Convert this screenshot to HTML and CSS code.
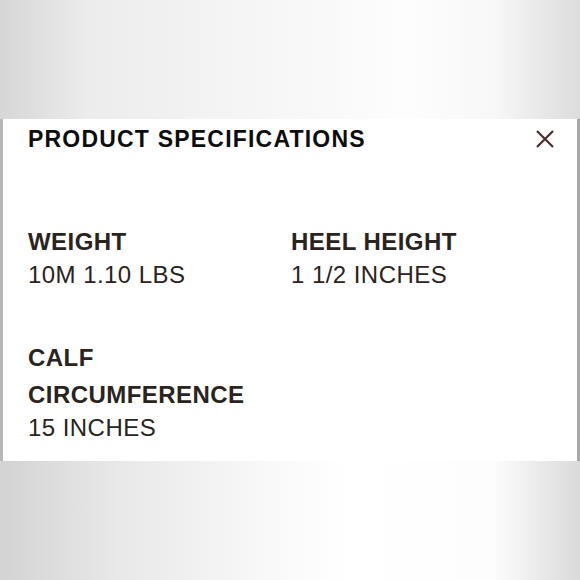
FILE: index.html
```html
<!DOCTYPE html>
<html>
<head>
<meta charset="utf-8">
<link rel="stylesheet" href="styles.css">
</head>
<body>
<div class="band band-top"></div>
<div class="panel-row">
  <section class="panel">
    <header class="panel-head">
      <h1 class="title">PRODUCT SPECIFICATIONS</h1>
      <button class="close" aria-label="Close">
        <svg width="20" height="20" viewBox="0 0 20 20"><path d="M2 2 L18 18 M18 2 L2 18" stroke="#4a2c2c" stroke-width="2.2" fill="none"/></svg>
      </button>
    </header>
    <div class="specs">
      <div class="spec">
        <div class="label">WEIGHT</div>
        <div class="value">10M 1.10 LBS</div>
      </div>
      <div class="spec">
        <div class="label">HEEL HEIGHT</div>
        <div class="value">1 1/2 INCHES</div>
      </div>
      <div class="spec">
        <div class="label">CALF CIRCUMFERENCE</div>
        <div class="value">15 INCHES</div>
      </div>
    </div>
  </section>
</div>
<div class="band band-bottom"></div>
</body>
</html>
```
FILE: styles.css
```css
html, body { margin: 0; padding: 0; }
body {
  width: 580px;
  height: 580px;
  overflow: hidden;
  font-family: "Liberation Sans", Arial, sans-serif;
  background: #eee;
  display: flex;
  flex-direction: column;
}
.band {
  height: 119px;
  background: linear-gradient(90deg, #d6d6d6 0%, #ececec 15%, #f6f6f6 45%, #fdfdfd 70%, #f8f8f8 85%, #dcdcdc 100%);
}
.band-bottom {
  flex: 1;
  background: linear-gradient(90deg, #d3d3d3 0%, #e8e8e8 20%, #f8f8f8 45%, #ffffff 60%, #fdfdfd 85%, #dadada 100%);
}
.panel-row {
  height: 342px;
  background: linear-gradient(90deg, #b8b8b8 0, #b8b8b8 3px, transparent 3px, transparent 577px, #a8a8a8 577px);
  padding: 0 3px;
}
.panel {
  background: #fff;
  height: 100%;
  padding: 0 0 0 25px;
  box-sizing: border-box;
}
.panel-head {
  display: flex;
  justify-content: space-between;
  align-items: center;
  padding-top: 5px;
  padding-right: 22px;
}
.title {
  margin: 0;
  font-size: 23px;
  line-height: 30px;
  font-weight: 700;
  color: #0d0d0d;
  letter-spacing: 1.2px;
}
.close {
  border: 0;
  background: none;
  padding: 0;
  width: 20px;
  height: 20px;
  display: flex;
}
.specs {
  display: grid;
  grid-template-columns: 263px 263px;
  row-gap: 50px;
  margin-top: 69px;
}
.label {
  font-size: 24px;
  line-height: 37px;
  font-weight: 700;
  color: #2a2320;
  letter-spacing: 0.45px;
}
.value {
  font-size: 24px;
  line-height: 29px;
  color: #2a2320;
  letter-spacing: 0.45px;
}
```
